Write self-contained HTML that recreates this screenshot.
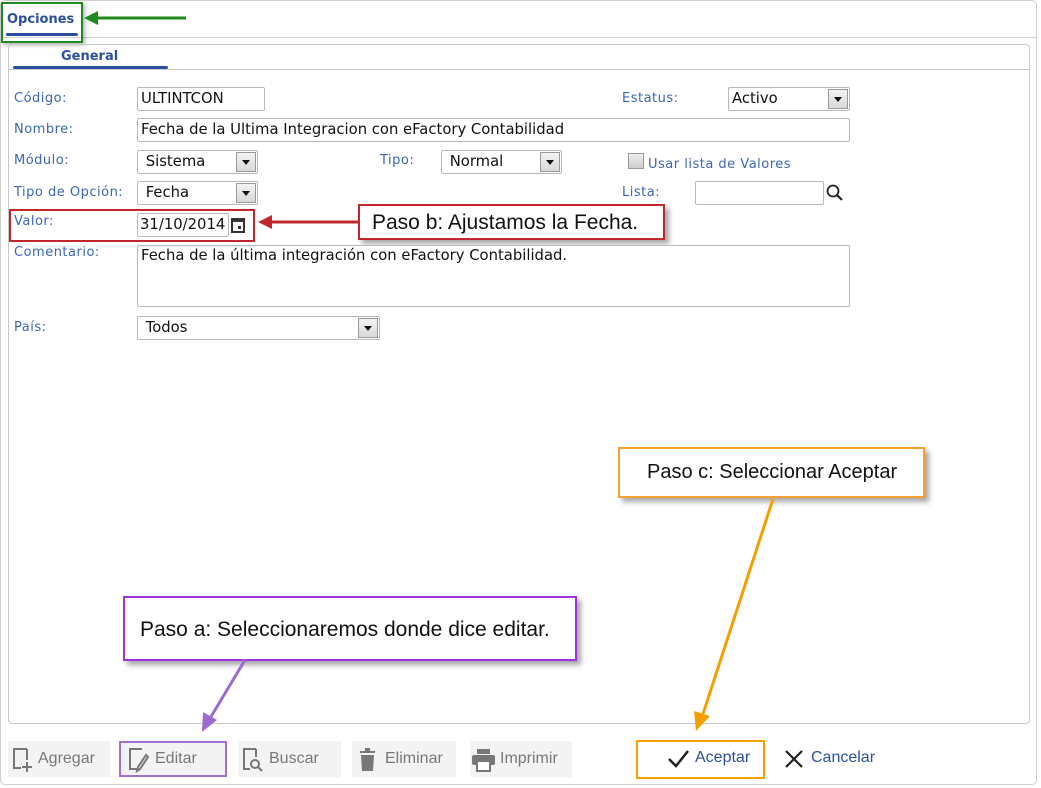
<!DOCTYPE html>
<html><head><meta charset="utf-8"><style>
*{box-sizing:border-box;margin:0;padding:0}
body{width:1041px;height:788px;background:#fff;position:relative;overflow:hidden;font-family:"DejaVu Sans","Liberation Sans",sans-serif}
.a{position:absolute}
.lbl{position:absolute;font-size:13px;color:#3d66b4;letter-spacing:0.5px}
.inp{position:absolute;border:1px solid #b8b8b8;border-radius:2px;background:#fff;font-size:14.8px;color:#111;padding-left:3px;line-height:22px;height:24px;white-space:nowrap;overflow:hidden}
.sel .dd{position:absolute;right:1px;top:1px;width:20px;height:20px;background:linear-gradient(#f4f4f4,#d8d8d8);border:1px solid #999}
.sel .dd:after{content:"";position:absolute;left:5px;top:7px;border-left:4px solid transparent;border-right:4px solid transparent;border-top:5px solid #111}
.call{position:absolute;background:#fff;font-family:"Liberation Sans",sans-serif;color:#111;font-size:21px;box-shadow:4px 4px 5px rgba(0,0,0,.35);white-space:nowrap}
.btn{position:absolute;top:741px;height:36px;background:#f3f3f3;font-family:"Liberation Sans",sans-serif;font-size:16px;color:#777;line-height:36px}
</style></head><body>
<div class="a" style="left:0;top:0;width:1037px;height:785px;border:1px solid #cfcfcf;border-radius:5px"></div>
<div class="a" style="left:1px;top:37px;width:1035px;height:1px;background:#d0d0d0"></div>
<div class="a" style="left:7px;top:12px;font-size:13px;font-weight:bold;color:#2c4f9e">Opciones</div>
<div class="a" style="left:6px;top:33px;width:72px;height:3px;background:#2a4fa0;border-radius:2px"></div>
<div class="a" style="left:1px;top:2px;width:82px;height:41px;border:2px solid #1f8a1f;box-shadow:2px 2px 4px rgba(0,0,0,.3)"></div>
<svg class="a" style="left:80px;top:8px" width="112" height="22"><line x1="106" y1="10" x2="14" y2="10" stroke="#1f8a1f" stroke-width="3"/><polygon points="4,10 18,3 18,17" fill="#1f8a1f"/></svg>

<div class="a" style="left:8px;top:44px;width:1022px;height:680px;border:1px solid #c8c8c8;border-radius:4px"></div>
<div class="a" style="left:9px;top:69px;width:1020px;height:1px;background:#c8c8c8"></div>
<div class="a" style="left:61px;top:49px;font-size:13px;font-weight:bold;color:#2c4f9e">General</div>
<div class="a" style="left:13px;top:66px;width:155px;height:3px;background:#2a4fa0;border-radius:2px"></div>

<div class="lbl" style="left:14px;top:91px">Código:</div>
<div class="inp" style="left:137px;top:87px;width:128px">ULTINTCON</div>
<div class="lbl" style="left:622px;top:91px">Estatus:</div>
<div class="inp sel" style="left:728px;top:87px;width:122px">Activo<div class="dd"></div></div>

<div class="lbl" style="left:14px;top:122px">Nombre:</div>
<div class="inp" style="left:137px;top:118px;width:713px">Fecha de la Ultima Integracion con eFactory Contabilidad</div>

<div class="lbl" style="left:14px;top:153px">Módulo:</div>
<div class="inp sel" style="left:137px;top:150px;width:121px">&nbsp;Sistema<div class="dd"></div></div>
<div class="lbl" style="left:380px;top:153px">Tipo:</div>
<div class="inp sel" style="left:441px;top:150px;width:121px">&nbsp;Normal<div class="dd"></div></div>
<div class="a" style="left:628px;top:153px;width:16px;height:16px;border:1px solid #999;background:linear-gradient(#eee,#ccc)"></div>
<div class="lbl" style="left:648px;top:157px">Usar lista de Valores</div>

<div class="lbl" style="left:14px;top:185px">Tipo de Opción:</div>
<div class="inp sel" style="left:137px;top:181px;width:121px">&nbsp;Fecha<div class="dd"></div></div>
<div class="lbl" style="left:622px;top:185px">Lista:</div>
<div class="inp" style="left:695px;top:181px;width:129px"></div>
<svg class="a" style="left:825px;top:183px" width="20" height="20"><circle cx="8" cy="8" r="5.5" fill="none" stroke="#222" stroke-width="1.8"/><line x1="12" y1="12" x2="17" y2="17" stroke="#222" stroke-width="2.2"/></svg>

<div class="lbl" style="left:14px;top:214px">Valor:</div>
<div class="inp" style="left:137px;top:213px;width:92px;padding-left:2px">31/10/2014</div>
<svg class="a" style="left:230px;top:216px" width="16" height="18"><rect x="2" y="3" width="12" height="13" fill="none" stroke="#333" stroke-width="2"/><rect x="2" y="3" width="12" height="3" fill="#333"/><rect x="8" y="10" width="3" height="3" fill="#333"/></svg>
<div class="a" style="left:9px;top:209px;width:246px;height:33px;border:2px solid #c0272d"></div>
<svg class="a" style="left:254px;top:212px" width="108" height="22"><line x1="104" y1="10" x2="14" y2="10" stroke="#c0272d" stroke-width="3"/><polygon points="4,10 18,3 18,17" fill="#c0272d"/></svg>
<div class="call" style="left:358px;top:204px;width:307px;height:36px;border:2px solid #c0272d;padding:5px 0 0 12px">Paso b: Ajustamos la Fecha.</div>

<div class="lbl" style="left:14px;top:245px">Comentario:</div>
<div class="inp" style="left:137px;top:245px;width:713px;height:62px;line-height:20px">Fecha de la última integración con eFactory Contabilidad.</div>
<div class="lbl" style="left:14px;top:320px">País:</div>
<div class="inp sel" style="left:137px;top:316px;width:243px">&nbsp;Todos<div class="dd"></div></div>

<div class="call" style="left:618px;top:447px;width:307px;height:51px;border:2px solid #f5a033;padding:12px 0 0 27px;font-size:20px">Paso c: Seleccionar Aceptar</div>
<svg class="a" style="left:680px;top:495px" width="100" height="240"><line x1="93" y1="4" x2="22" y2="222" stroke="#f5a000" stroke-width="3"/><polygon points="16,236 14,216 30,221" fill="#f5a000"/></svg>
<div class="call" style="left:123px;top:596px;width:454px;height:65px;border:2px solid #a033e0;padding:20px 0 0 15px">Paso a: Seleccionaremos donde dice editar.</div>
<svg class="a" style="left:195px;top:658px" width="60" height="78"><line x1="50" y1="2" x2="14" y2="62" stroke="#9b6bd0" stroke-width="3"/><polygon points="7,74 8,54 22,62" fill="#9b6bd0"/></svg>

<div class="btn" style="left:8px;width:102px"><svg class="a" style="left:3px;top:6px" width="24" height="26"><path d="M16 2H3v19h7" fill="none" stroke="#777" stroke-width="2"/><path d="M16 2v11" stroke="#777" stroke-width="2"/><path d="M16 15v10M11 20h10" stroke="#777" stroke-width="2"/></svg><span class="a" style="left:30px">Agregar</span></div>
<div class="btn" style="left:119px;width:108px;border:2px solid #a46fd4;line-height:32px"><svg class="a" style="left:6px;top:4px" width="24" height="26"><path d="M15 2H3v20h8" fill="none" stroke="#777" stroke-width="2"/><path d="M19 8l-8 12-1 4 3-2 8-12z" fill="none" stroke="#777" stroke-width="2"/></svg><span class="a" style="left:34px">Editar</span></div>
<div class="btn" style="left:238px;width:103px"><svg class="a" style="left:3px;top:6px" width="24" height="26"><path d="M15 2H3v20h6" fill="none" stroke="#777" stroke-width="2"/><path d="M15 2v8" stroke="#777" stroke-width="2"/><circle cx="14" cy="17" r="4" fill="none" stroke="#777" stroke-width="2"/><path d="M17 20l4 4" stroke="#777" stroke-width="2"/></svg><span class="a" style="left:31px">Buscar</span></div>
<div class="btn" style="left:352px;width:104px"><svg class="a" style="left:6px;top:6px" width="20" height="26"><rect x="2" y="4" width="15" height="2" fill="#777"/><rect x="7" y="1" width="5" height="3" fill="#777"/><path d="M3 8h13l-1 16H4z" fill="#777"/></svg><span class="a" style="left:33px">Eliminar</span></div>
<div class="btn" style="left:470px;width:102px"><svg class="a" style="left:1px;top:7px" width="26" height="24"><rect x="6" y="1" width="13" height="5" fill="#777"/><rect x="1" y="7" width="23" height="10" rx="2" fill="#777"/><rect x="6" y="13" width="13" height="10" fill="#fff" stroke="#777" stroke-width="2"/></svg><span class="a" style="left:30px">Imprimir</span></div>

<div class="a" style="left:636px;top:740px;width:129px;height:39px;border:2px solid #f5a000"></div>
<svg class="a" style="left:667px;top:748px" width="24" height="22"><path d="M2 11l7 7L21 3" fill="none" stroke="#222" stroke-width="2.5"/></svg>
<div class="a" style="left:695px;top:749px;font-family:'Liberation Sans',sans-serif;font-size:16px;color:#2c4f9e">Aceptar</div>
<svg class="a" style="left:783px;top:748px" width="22" height="22"><path d="M3 3l16 16M19 3L3 19" stroke="#222" stroke-width="2.2"/></svg>
<div class="a" style="left:811px;top:749px;font-family:'Liberation Sans',sans-serif;font-size:16px;color:#2c4f9e">Cancelar</div>
</body></html>
